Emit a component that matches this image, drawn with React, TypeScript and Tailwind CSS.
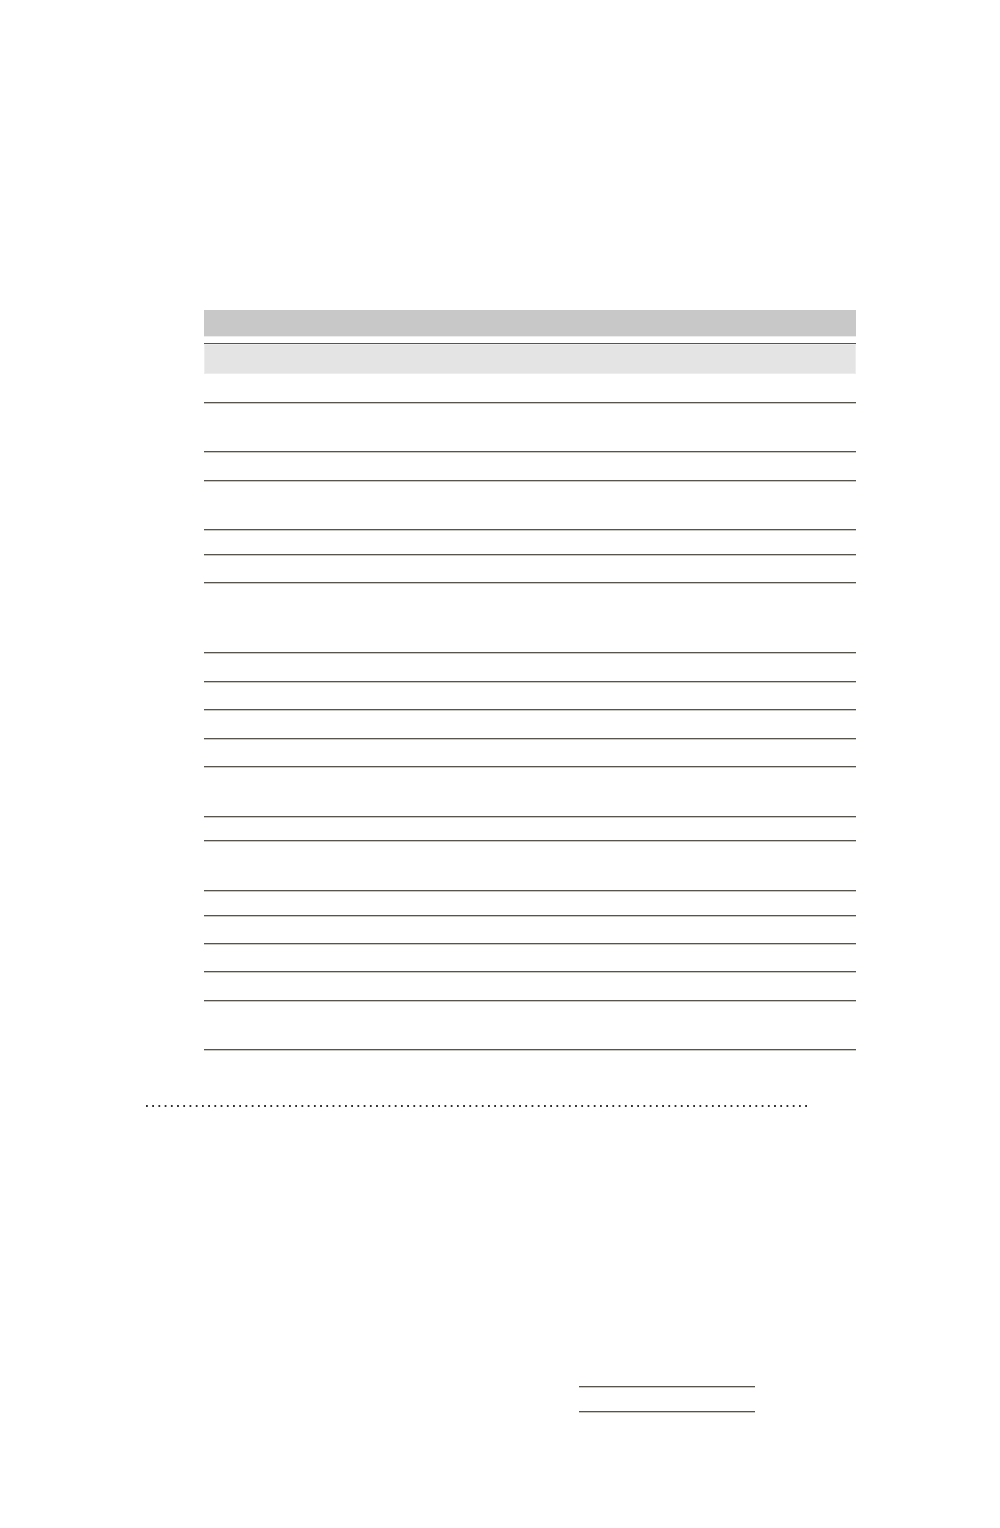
const rowHeights = [
  'h-[29px]',
  'h-[49px]',
  'h-[29px]',
  'h-[49px]',
  'h-[25px]',
  'h-[28px]',
  'h-[70px]',
  'h-[29px]',
  'h-[28px]',
  'h-[29px]',
  'h-[28px]',
  'h-[50px]',
  'h-[24px]',
  'h-[50px]',
  'h-[25px]',
  'h-[28px]',
  'h-[28px]',
  'h-[29px]',
  'h-[49px]',
];

const Row = ({ height }: { height: string }): JSX.Element => (
  <div className={`${height} border-b border-[#56544c] shadow-[0_1px_0_#c9c7c1]`} />
);

export default function App(): JSX.Element {
  return (
    <div className="min-h-[1528px] bg-white pt-[310px] font-['Liberation_Sans',sans-serif]">
      {/* table */}
      <section className="ml-[204px] w-[652px]">
        <div className="h-[27px] border-b border-[#ececec] bg-[#c8c8c8]" />
        <div className="h-[6px]" />
        <div className="h-px bg-[#56544c]" />
        <div className="h-[30px] border border-[#ededed] bg-[#e4e4e4]" />
        {rowHeights.map((h, i) => (
          <Row key={i} height={h} />
        ))}
      </section>

      {/* dotted separator */}
      <div className="ml-[146px] mt-[55px] h-[2px] w-[662px] bg-[linear-gradient(90deg,#2e2e2e_0_1.7px,transparent_1.7px)] bg-[length:6.22px_2px] bg-repeat-x" />

      {/* signature lines */}
      <div className="ml-[579px] mt-[279px] flex w-[176px] flex-col gap-[24px]">
        <div className="h-px bg-[#56544c] shadow-[0_1px_0_#c9c7c1]" />
        <div className="h-px bg-[#56544c] shadow-[0_1px_0_#c9c7c1]" />
      </div>
    </div>
  );
}
